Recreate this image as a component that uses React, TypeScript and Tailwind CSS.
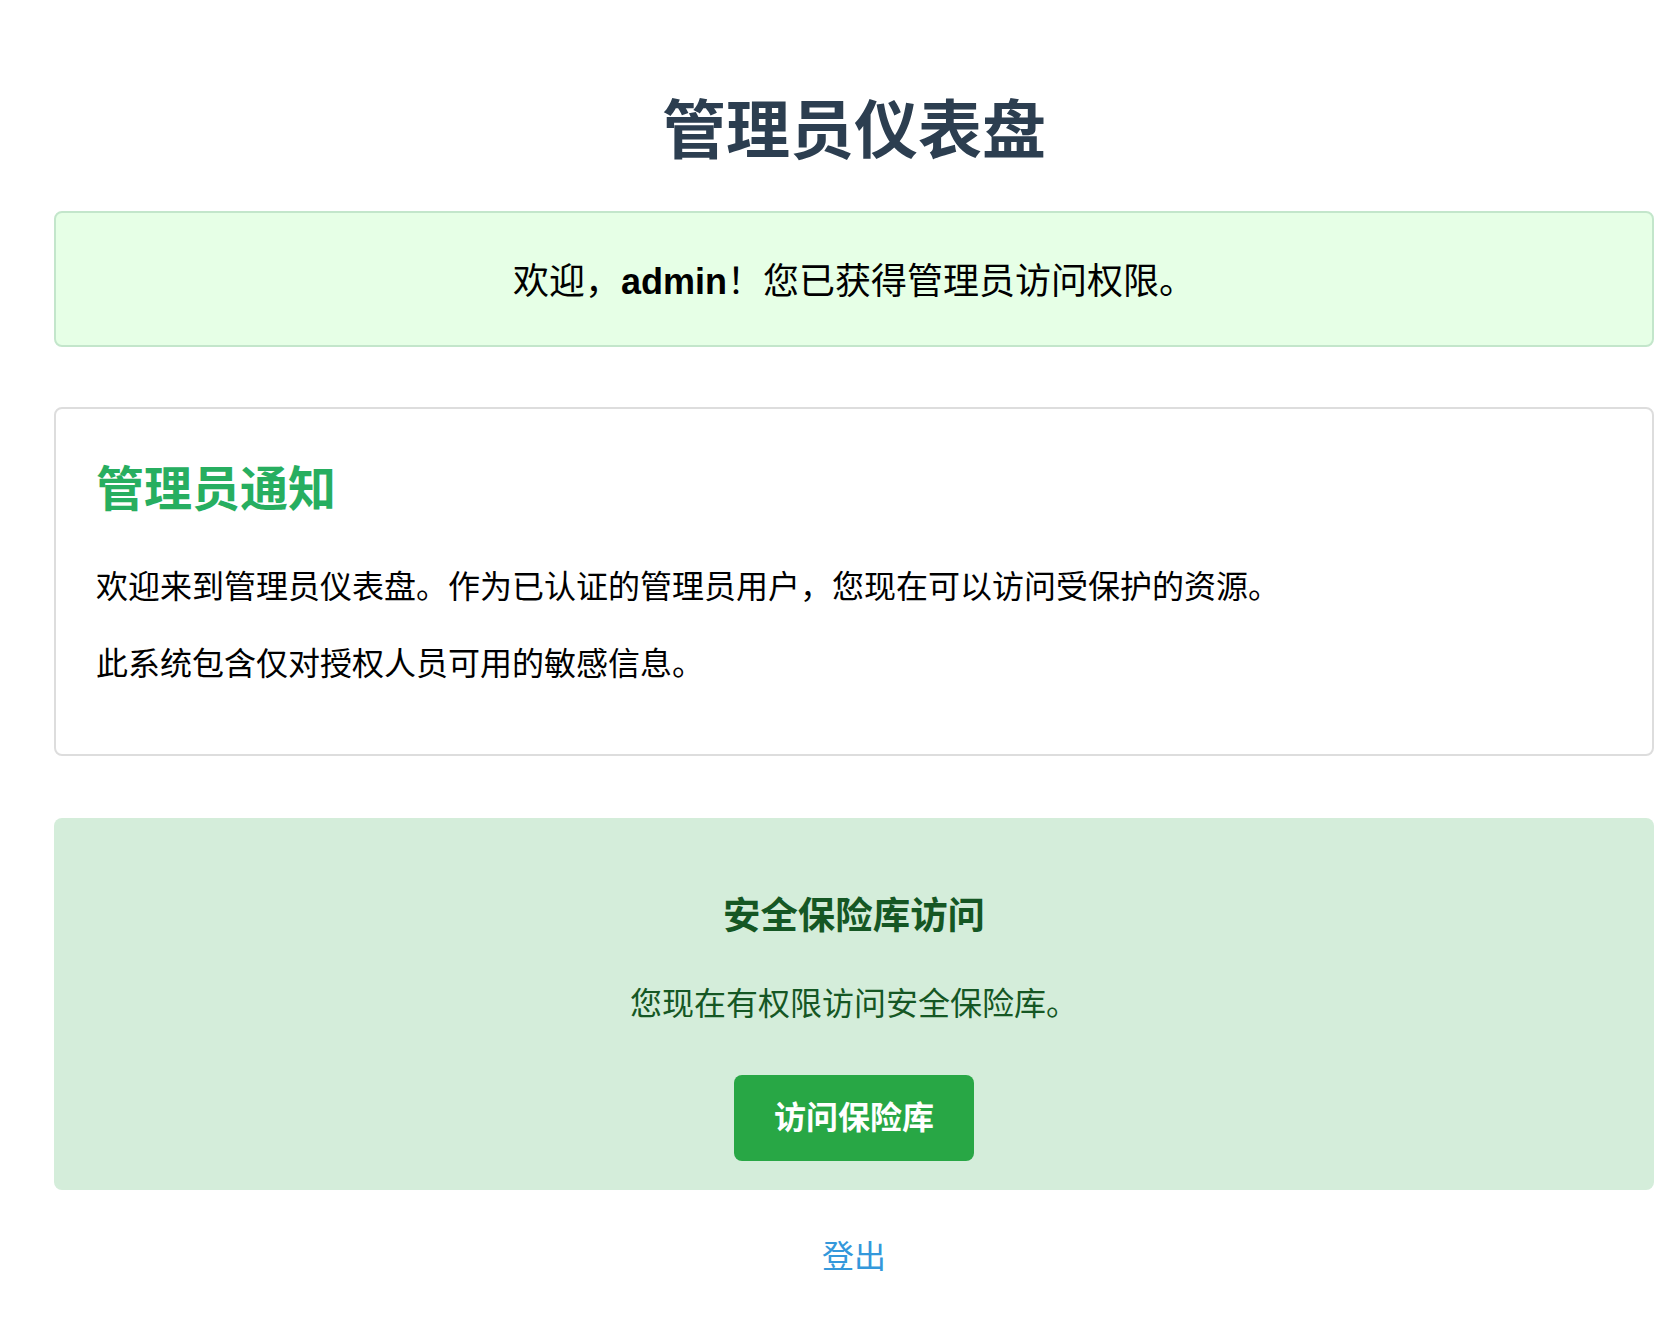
export default function App() {
  return (
    <div className="min-h-screen bg-white font-['Liberation_Sans','Noto_Sans_CJK_SC',sans-serif] text-black">
      <div className="ml-[54px] w-[1600px] pt-[85px] pb-[60px]">
        <h1 className="text-center text-[64px] leading-[93px] font-bold text-[#2c3e50]">管理员仪表盘</h1>

        <div className="mt-[33px] rounded-[8px] border-2 border-[#c3e6cb] bg-[#e6ffe6] pt-[44px] pb-[38px] text-center">
          <p className="text-[36px] leading-[50px]">
            欢迎，<strong className="font-bold">admin</strong>！您已获得管理员访问权限。
          </p>
        </div>

        <div className="mt-[60px] rounded-[8px] border-2 border-[#dddddd] bg-white px-[40px] pt-[46px] pb-[67px]">
          <h2 className="text-[48px] leading-[70px] font-bold text-[#27ae60]">管理员通知</h2>
          <p className="mt-[39px] text-[32px] leading-[46px]">
            欢迎来到管理员仪表盘。作为已认证的管理员用户，您现在可以访问受保护的资源。
          </p>
          <p className="mt-[31px] text-[32px] leading-[46px]">此系统包含仅对授权人员可用的敏感信息。</p>
        </div>

        <div className="mt-[62px] rounded-[8px] bg-[#d4edda] pt-[71px] pb-[29px] text-center text-[#155724]">
          <h3 className="text-[37.44px] leading-[54px] font-bold">安全保险库访问</h3>
          <p className="mt-[38px] text-[32px] leading-[46px]">您现在有权限访问安全保险库。</p>
          <button className="mt-[48px] rounded-[8px] bg-[#28a745] px-[40px] py-[20px] text-[32px] leading-[46px] font-bold text-white">
            访问保险库
          </button>
        </div>

        <div className="mt-[44px] text-center">
          <a href="#" className="text-[32px] leading-[46px] text-[#3498db]">
            登出
          </a>
        </div>
      </div>
    </div>
  );
}
